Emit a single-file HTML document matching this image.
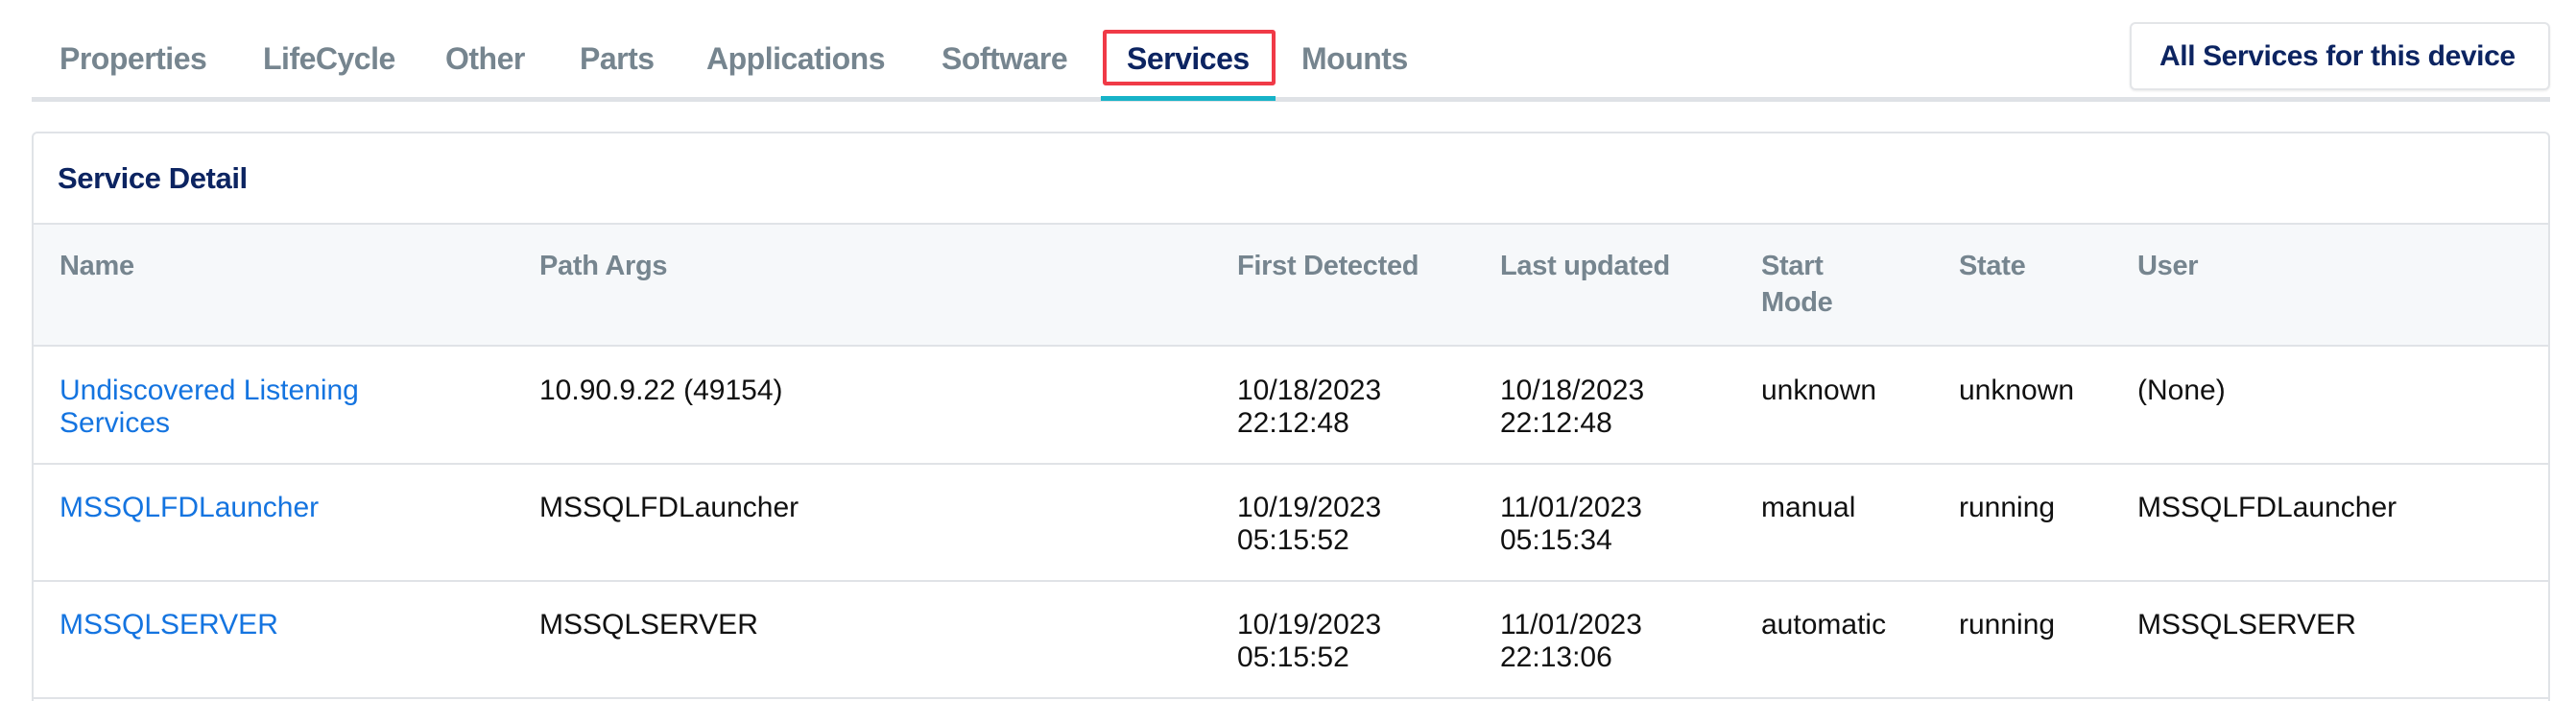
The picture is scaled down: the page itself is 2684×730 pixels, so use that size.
<!DOCTYPE html>
<html style="width:2684px;height:730px;overflow:hidden"><head><meta charset="utf-8"><style>
*{margin:0;padding:0;box-sizing:border-box}
body{width:2684px;height:730px;background:#fff;position:relative;overflow:hidden;font-family:"Liberation Sans",sans-serif}
.a{position:absolute;white-space:nowrap}
.tab{font-size:32px;font-weight:bold;color:#76858f;line-height:40px;top:41px;letter-spacing:-0.5px}
.h{font-size:29px;font-weight:bold;color:#76858f;line-height:38px;letter-spacing:-0.3px}
.c{font-size:30px;color:#111;line-height:34px}
.l{color:#1474e0}
</style></head><body>
<div class="a tab" style="left:62px">Properties</div>
<div class="a tab" style="left:274px">LifeCycle</div>
<div class="a tab" style="left:464px">Other</div>
<div class="a tab" style="left:604px">Parts</div>
<div class="a tab" style="left:736px">Applications</div>
<div class="a tab" style="left:981px">Software</div>
<div class="a tab" style="left:1174px;color:#0c2461">Services</div>
<div class="a tab" style="left:1356px">Mounts</div>
<div class="a" style="left:1149px;top:31px;width:180px;height:58px;border:4px solid #f03a47;border-radius:3px"></div>
<div class="a" style="left:33px;top:101px;width:2624px;height:5px;background:#dfe2e6"></div>
<div class="a" style="left:1147px;top:100px;width:182px;height:5px;background:#17b3c8"></div>
<div class="a" style="left:2219px;top:23px;width:438px;height:71px;border:2px solid #e3e5e8;border-radius:6px;box-shadow:0 1px 2px rgba(0,0,0,.08)"></div>
<div class="a" style="left:2250px;top:39px;font-size:30px;font-weight:bold;color:#0c2461;line-height:40px;letter-spacing:-0.4px">All Services for this device</div>
<div class="a" style="left:33px;top:137px;width:2624px;height:593px;border:2px solid #e0e3e7;border-bottom:none;border-radius:6px 6px 0 0"></div>
<div class="a" style="left:60px;top:166px;font-size:31px;font-weight:bold;color:#0c2461;line-height:40px;letter-spacing:-0.4px">Service Detail</div>
<div class="a" style="left:35px;top:232px;width:2620px;height:129px;background:#f6f8fa;border-top:2px solid #e0e3e7;border-bottom:2px solid #e0e3e7"></div>
<div class="a h" style="left:62px;top:258px">Name</div>
<div class="a h" style="left:562px;top:258px">Path Args</div>
<div class="a h" style="left:1289px;top:258px">First Detected</div>
<div class="a h" style="left:1563px;top:258px">Last updated</div>
<div class="a h" style="left:1835px;top:258px">Start<br>Mode</div>
<div class="a h" style="left:2041px;top:258px">State</div>
<div class="a h" style="left:2227px;top:258px">User</div>
<div class="a" style="left:35px;top:482px;width:2620px;height:2px;background:#e0e3e7"></div>
<div class="a" style="left:35px;top:604px;width:2620px;height:2px;background:#e0e3e7"></div>
<div class="a" style="left:35px;top:726px;width:2620px;height:2px;background:#e0e3e7"></div>

<div class="a c l" style="left:62px;top:390px">Undiscovered Listening<br>Services</div>
<div class="a c" style="left:562px;top:390px">10.90.9.22 (49154)</div>
<div class="a c" style="left:1289px;top:390px">10/18/2023<br>22:12:48</div>
<div class="a c" style="left:1563px;top:390px">10/18/2023<br>22:12:48</div>
<div class="a c" style="left:1835px;top:390px">unknown</div>
<div class="a c" style="left:2041px;top:390px">unknown</div>
<div class="a c" style="left:2227px;top:390px">(None)</div>

<div class="a c l" style="left:62px;top:512px">MSSQLFDLauncher</div>
<div class="a c" style="left:562px;top:512px">MSSQLFDLauncher</div>
<div class="a c" style="left:1289px;top:512px">10/19/2023<br>05:15:52</div>
<div class="a c" style="left:1563px;top:512px">11/01/2023<br>05:15:34</div>
<div class="a c" style="left:1835px;top:512px">manual</div>
<div class="a c" style="left:2041px;top:512px">running</div>
<div class="a c" style="left:2227px;top:512px">MSSQLFDLauncher</div>

<div class="a c l" style="left:62px;top:634px">MSSQLSERVER</div>
<div class="a c" style="left:562px;top:634px">MSSQLSERVER</div>
<div class="a c" style="left:1289px;top:634px">10/19/2023<br>05:15:52</div>
<div class="a c" style="left:1563px;top:634px">11/01/2023<br>22:13:06</div>
<div class="a c" style="left:1835px;top:634px">automatic</div>
<div class="a c" style="left:2041px;top:634px">running</div>
<div class="a c" style="left:2227px;top:634px">MSSQLSERVER</div>
</body></html>
